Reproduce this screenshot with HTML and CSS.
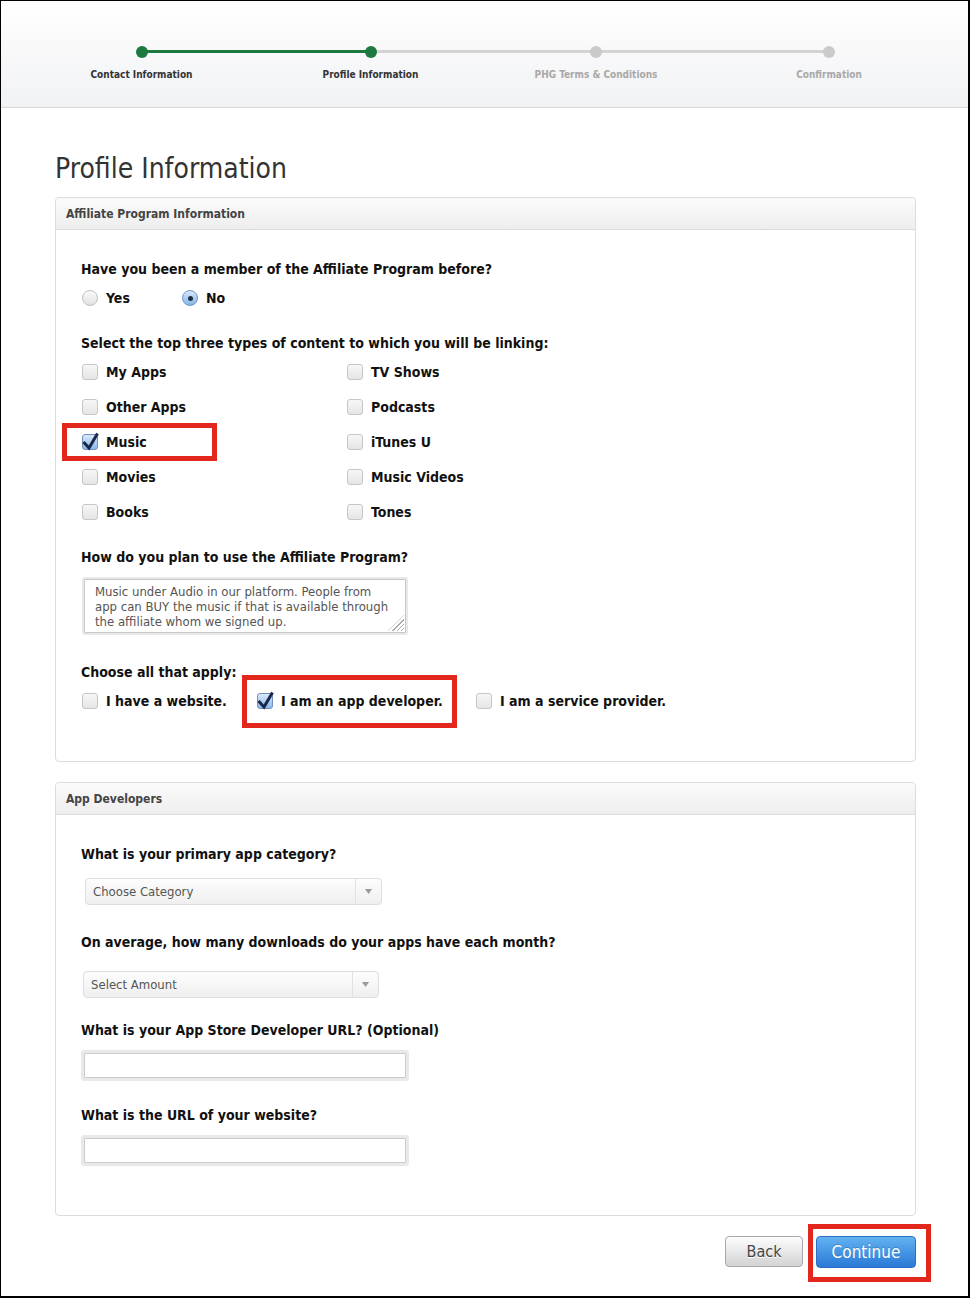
FILE: index.html
```html
<!DOCTYPE html>
<html lang="en">
<head>
    <meta charset="UTF-8">
    <title>Profile Information</title>
    <link rel="stylesheet" href="styles.css">
</head>
<body>
<div class="page">
    <header class="steps">
        <div class="step done"><span class="dot"></span><span class="step-label">Contact Information</span></div>
        <div class="step done"><span class="dot"></span><span class="step-label">Profile Information</span></div>
        <div class="step"><span class="dot"></span><span class="step-label">PHG Terms &amp; Conditions</span></div>
        <div class="step"><span class="dot"></span><span class="step-label">Confirmation</span></div>
    </header>

    <main class="content">
        <h1>Profile Information</h1>

        <section class="panel">
            <div class="panel-head">Affiliate Program Information</div>
            <div class="panel-body">
                <p class="question">Have you been a member of the Affiliate Program before?</p>
                <div class="radios">
                    <label class="opt"><span class="radio"></span>Yes</label>
                    <label class="opt"><span class="radio on"></span>No</label>
                </div>

                <p class="question q-gap">Select the top three types of content to which you will be linking:</p>
                <div class="types">
                    <label class="opt"><span class="box"></span>My Apps</label>
                    <label class="opt"><span class="box"></span>Other Apps</label>
                    <label class="opt mark mark-music"><span class="box on"><svg viewBox="0 0 16 16"><path d="M1.5 8 L7 14 L15.5 -0.5"/></svg></span>Music</label>
                    <label class="opt"><span class="box"></span>Movies</label>
                    <label class="opt"><span class="box"></span>Books</label>
                    <label class="opt"><span class="box"></span>TV Shows</label>
                    <label class="opt"><span class="box"></span>Podcasts</label>
                    <label class="opt"><span class="box"></span>iTunes U</label>
                    <label class="opt"><span class="box"></span>Music Videos</label>
                    <label class="opt"><span class="box"></span>Tones</label>
                </div>

                <p class="question q-gap">How do you plan to use the Affiliate Program?</p>
                <div class="textarea">Music under Audio in our platform. People from<br>app can BUY the music if that is available through<br>the affiliate whom we signed up.</div>

                <p class="question q-gap-ta">Choose all that apply:</p>
                <div class="applies">
                    <label class="opt"><span class="box"></span>I have a website.</label>
                    <label class="opt mark mark-dev"><span class="box on"><svg viewBox="0 0 16 16"><path d="M1.5 8 L7 14 L15.5 -0.5"/></svg></span>I am an app developer.</label>
                    <label class="opt"><span class="box"></span>I am a service provider.</label>
                </div>
            </div>
        </section>

        <section class="panel panel-dev">
            <div class="panel-head">App Developers</div>
            <div class="panel-body panel-body-dev">
                <p class="question">What is your primary app category?</p>
                <div class="select select-cat">
                    <span class="select-text">Choose Category</span>
                    <span class="caret"><svg viewBox="0 0 7 5"><polygon points="0,0 7,0 3.5,5"/></svg></span>
                </div>

                <p class="question q-gap-sel">On average, how many downloads do your apps have each month?</p>
                <div class="select select-amount">
                    <span class="select-text">Select Amount</span>
                    <span class="caret"><svg viewBox="0 0 7 5"><polygon points="0,0 7,0 3.5,5"/></svg></span>
                </div>

                <p class="question q-gap-url">What is your App Store Developer URL? (Optional)</p>
                <div class="input"></div>

                <p class="question q-gap-in">What is the URL of your website?</p>
                <div class="input"></div>
            </div>
        </section>

        <div class="actions">
            <button class="btn btn-back">Back</button>
            <span class="mark mark-continue"><button class="btn btn-primary">Continue</button></span>
        </div>
    </main>
</div>
</body>
</html>
```

FILE: styles.css
```css
body { margin: 0; font-family: "DejaVu Sans Condensed", "DejaVu Sans", sans-serif; font-stretch: condensed; color: #111; background: #fff; }
.page { width: 970px; height: 1298px; box-sizing: border-box; border: 1px solid #000; border-right-width: 2px; border-bottom-width: 2px; background: #fff; overflow: hidden; }

/* progress header */
.steps { height: 61px; padding: 45px 0 0 26px; border-bottom: 1px solid #d6d7d9; display: grid; grid-template-columns: 229px 229px 222px 244px; align-content: start;
    background: linear-gradient(#1c7a40, #1c7a40) 140px 49px / 231px 3px no-repeat,
                linear-gradient(#d3d3d3, #d3d3d3) 371px 49px / 458px 3px no-repeat,
                linear-gradient(#ffffff, #f1f2f4); }
.step { display: flex; flex-direction: column; align-items: center; }
.dot { width: 12px; height: 12px; border-radius: 50%; background: #cacaca; }
.step.done .dot { background: #1c7a40; }
.step-label { margin-top: 10px; font-size: 10px; line-height: 14px; font-weight: bold; color: #a8a8a8; white-space: nowrap; }
.step.done .step-label { color: #333; }

.content { padding: 0 52px 0 54px; }
h1 { margin: 44px 0 11px; font-size: 28px; line-height: 34px; font-weight: normal; color: #333; }

/* panels */
.panel { border: 1px solid #dcdcdc; border-radius: 4px; }
.panel-dev { margin-top: 20px; }
.panel-head { height: 31px; line-height: 32px; padding: 0 10px; border-bottom: 1px solid #dcdcdc; border-radius: 4px 4px 0 0; background: linear-gradient(#fbfbfb, #eeeeee); font-size: 12px; font-weight: bold; color: #444; }
.panel-body { padding: 29px 25px 50px; }
.panel-body-dev { padding-bottom: 52px; }

.question { margin: 0; font-size: 14px; line-height: 20px; font-weight: bold; }
.q-gap { margin-top: 25px; }
.q-gap-ta { margin-top: 29px; }
.q-gap-sel { margin-top: 27px; }
.q-gap-url { margin-top: 22px; }
.q-gap-in { margin-top: 27px; }

.opt { display: flex; align-items: center; gap: 8px; height: 20px; font-size: 14px; font-weight: bold; white-space: nowrap; }
.radios { margin-top: 9px; padding-left: 1px; display: grid; grid-template-columns: 100px auto; }
.types { margin-top: 9px; padding-left: 1px; display: grid; grid-template-columns: 265px auto; grid-template-rows: repeat(5, 20px); grid-auto-flow: column; row-gap: 15px; }
.applies { margin-top: 9px; padding-left: 1px; display: grid; grid-template-columns: 175px 219px auto; }

.radio { width: 14px; height: 14px; border: 1px solid #c2c2c2; border-radius: 50%; background: linear-gradient(#fafafa, #e2e2e2); display: flex; align-items: center; justify-content: center; }
.radio.on { border-color: #7095c2; background: linear-gradient(#d6e8fa, #86b5e8); }
.radio.on::after { content: ""; width: 5px; height: 5px; border-radius: 50%; background: #1f2d45; }

.box { width: 14px; height: 14px; border: 1px solid #c6c6c6; border-radius: 3px; background: linear-gradient(#f7f7f7, #e5e5e5); }
.box.on { border-color: #7292bb; background: linear-gradient(#d8e9fb, #8db9ea); }
.box svg { display: block; width: 16px; height: 16px; margin: -1px 0 0 -1px; overflow: visible; }
.box svg path { fill: none; stroke: #17284a; stroke-width: 3; stroke-linejoin: miter; }

/* red annotation frames */
.mark { position: relative; }
.mark::after { content: ""; position: absolute; box-sizing: border-box; border: 5px solid #e3271c; pointer-events: none; }
.mark-music::after { left: -20px; top: -9px; width: 155px; height: 38px; }
.mark-dev::after { left: -15px; top: -16px; width: 215px; height: 53px; }
.mark-continue::after { left: -8px; top: -12px; width: 123px; height: 58px; }

/* fields */
.textarea { position: relative; width: 310px; height: 48px; margin: 12px 0 0 3px; padding: 4px 0 0 10px; border: 1px solid #c8c8c8; box-shadow: 0 0 0 2px #e8e8e8; border-radius: 1px; font-size: 13px; line-height: 15px; color: #555; white-space: nowrap; }
.textarea::after { content: ""; position: absolute; right: 1px; bottom: 1px; width: 16px; height: 16px; background: repeating-linear-gradient(135deg, transparent 0 2px, #a9a9a9 2px 3px); clip-path: polygon(100% 0, 100% 100%, 0 100%); }

.select { display: flex; height: 25px; border: 1px solid #dedede; border-radius: 4px; background: linear-gradient(#fdfdfd, #efefef); font-size: 13px; color: #555; }
.select-cat { width: 295px; margin: 14px 0 0 4px; }
.select-amount { width: 294px; margin: 19px 0 0 2px; }
.select-text { flex: 1; line-height: 25px; padding-left: 7px; }
.caret { width: 25px; border-left: 1px solid #e2e2e2; display: flex; align-items: center; justify-content: center; }
.caret svg { width: 7px; height: 5px; fill: #9a9a9a; }

.input { width: 320px; height: 23px; margin: 13px 0 0 3px; border: 1px solid #cccccc; box-shadow: 0 0 0 3px #e9e9e9; border-radius: 1px; background: #fff; }

/* buttons */
.actions { margin-top: 20px; display: flex; justify-content: flex-end; align-items: flex-start; gap: 13px; }
.btn { margin: 0; padding: 0; border-radius: 4px; font-family: inherit; font-stretch: condensed; cursor: pointer; }
.btn-back { width: 78px; height: 31px; border: 1px solid #a9a9a9; background: linear-gradient(#fdfdfd, #d3d3d3); color: #444; font-size: 16px; text-shadow: 0 1px 0 #fff; }
.btn-primary { display: block; width: 100px; height: 32px; border: 1px solid #2d6fc4; background: linear-gradient(#62b2f1, #2a79d7); color: #fff; font-size: 17px; text-shadow: 0 -1px 0 rgba(0,0,0,0.2); }
```
